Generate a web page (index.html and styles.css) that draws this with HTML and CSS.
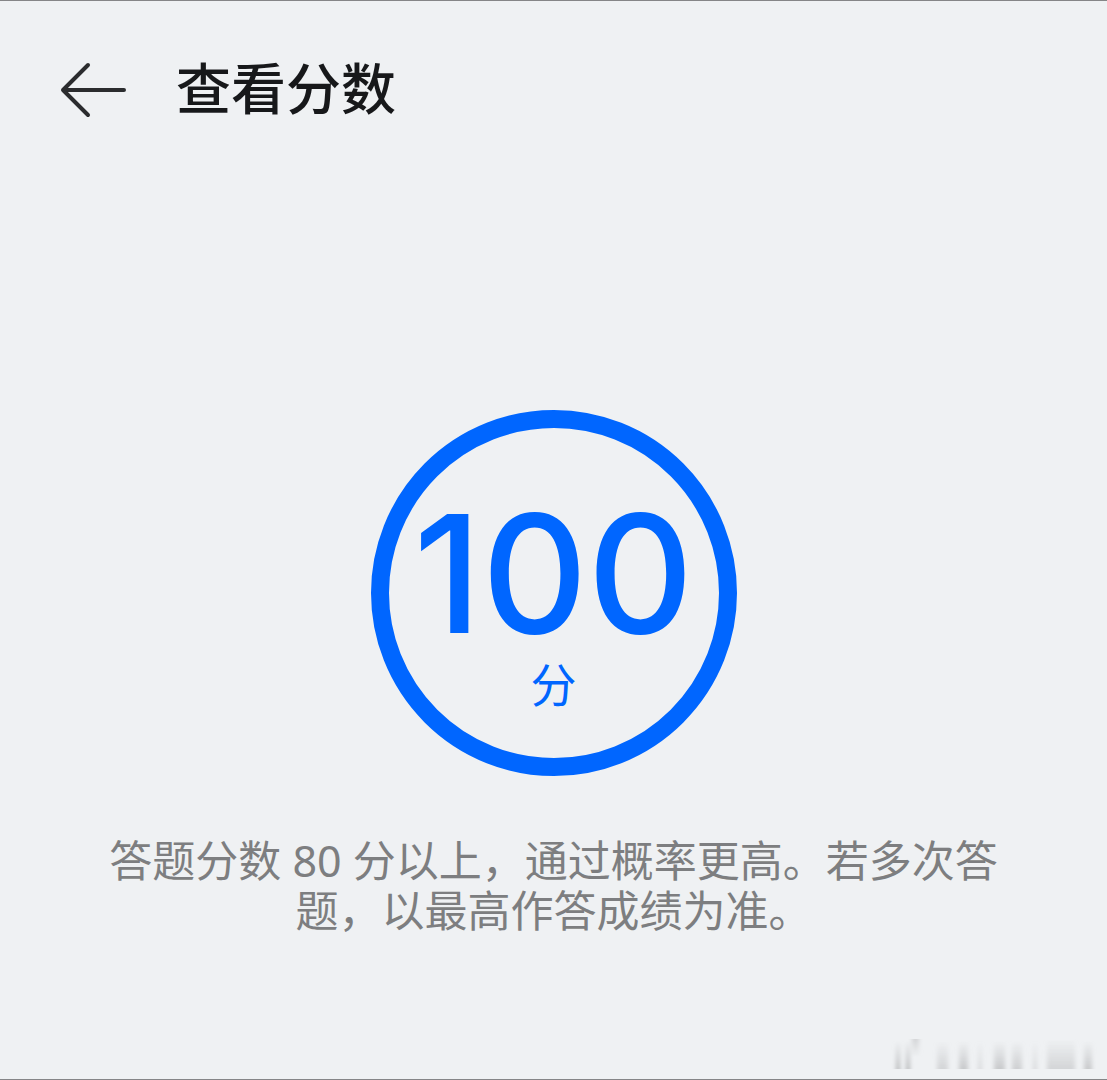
FILE: index.html
```html
<!DOCTYPE html>
<html lang="zh-CN">
<head>
  <meta charset="UTF-8">
  <meta name="viewport" content="width=device-width, initial-scale=1.0">
  <title>查看分数</title>
  <link rel="stylesheet" href="styles.css">
</head>
<body>
  <header>
    <button class="back" type="button" aria-label="返回">
      <svg width="68" height="56" viewBox="0 0 68 56" fill="none" stroke="currentColor" stroke-width="4" stroke-linecap="round" stroke-linejoin="round">
        <path d="M28 3L3 28L28 53M3 28H64"/>
      </svg>
    </button>
    <h1>查看分数</h1>
  </header>
  <main>
    <div class="score">
      <span class="number">100</span>
      <span class="unit">分</span>
    </div>
    <p class="hint">答题分数 80 分以上，通过概率更高。若多次答题，以最高作答成绩为准。</p>
  </main>
  <footer>
    <svg class="smudge" width="210" height="40" viewBox="0 0 210 40" aria-hidden="true">
      <defs>
        <linearGradient id="fade" x1="0" y1="0" x2="0" y2="1">
          <stop offset="0" stop-color="#b8b9bb" stop-opacity="0"/>
          <stop offset="1" stop-color="#b8b9bb"/>
        </linearGradient>
        <linearGradient id="fade-up" x1="0" y1="0" x2="0" y2="1">
          <stop offset="0" stop-color="#c8c9cb"/>
          <stop offset="1" stop-color="#c8c9cb" stop-opacity="0"/>
        </linearGradient>
        <filter id="soft" x="-5%" y="-10%" width="110%" height="120%">
          <feGaussianBlur stdDeviation="2 0"/>
        </filter>
      </defs>
      <g filter="url(#soft)" fill="url(#fade)">
        <rect x="5" y="6" width="4" height="28"/>
        <rect x="15" y="6" width="4" height="28"/>
        <rect x="21" y="4" width="7" height="18" fill="url(#fade-up)" opacity=".7"/>
        <rect x="46" y="6" width="11" height="28" opacity=".5"/>
        <rect x="68" y="6" width="9" height="28" opacity=".7"/>
        <rect x="87" y="6" width="4" height="28" opacity=".4"/>
        <rect x="103" y="6" width="11" height="28" opacity=".7"/>
        <rect x="121" y="6" width="10" height="28" opacity=".6"/>
        <rect x="142" y="6" width="4" height="28" opacity=".4"/>
        <rect x="156" y="4" width="28" height="30" opacity=".5"/>
        <rect x="193" y="6" width="8" height="28" opacity=".7"/>
      </g>
    </svg>
  </footer>
</body>
</html>
```

FILE: styles.css
```css
* {
  box-sizing: border-box;
}

body {
  min-height: 100vh;
  margin: 0;
  display: flex;
  flex-direction: column;
  background: #eff1f3;
  border-top: 1px solid #858587;
  border-bottom: 1px solid #858587;
  font-family: "Noto Sans", "Noto Sans CJK SC", sans-serif;
}

header {
  display: flex;
  align-items: center;
  gap: 48px;
  padding: 49px 60px 0;
}

.back {
  display: flex;
  padding: 0;
  border: none;
  background: none;
  color: #2b2c2e;
  cursor: pointer;
}

h1 {
  margin: 0;
  padding-bottom: 10px;
  font-size: 55px;
  line-height: 70px;
  font-weight: 500;
  font-family: "Noto Sans CJK SC", sans-serif;
  color: #17181a;
}

main {
  flex-grow: 1;
  display: flex;
  flex-direction: column;
  align-items: center;
  gap: 60px;
  padding: 280px 108px 0;
}

.score {
  width: 366px;
  height: 366px;
  padding-top: 18px;
  display: flex;
  flex-direction: column;
  align-items: center;
  justify-content: center;
  border: 18px solid #0066ff;
  border-radius: 50%;
  color: #0066ff;
}

.number {
  font-family: Inter, sans-serif;
  font-size: 164px;
  line-height: 160px;
  font-weight: 500;
}

.unit {
  font-family: "Noto Sans CJK SC", sans-serif;
  font-size: 46px;
  line-height: 56px;
}

.hint {
  margin: 0;
  font-size: 43px;
  line-height: 50px;
  text-align: center;
  color: #7d7e80;
}

footer {
  display: flex;
  justify-content: flex-end;
  padding: 0 6px 4px 0;
}
```
